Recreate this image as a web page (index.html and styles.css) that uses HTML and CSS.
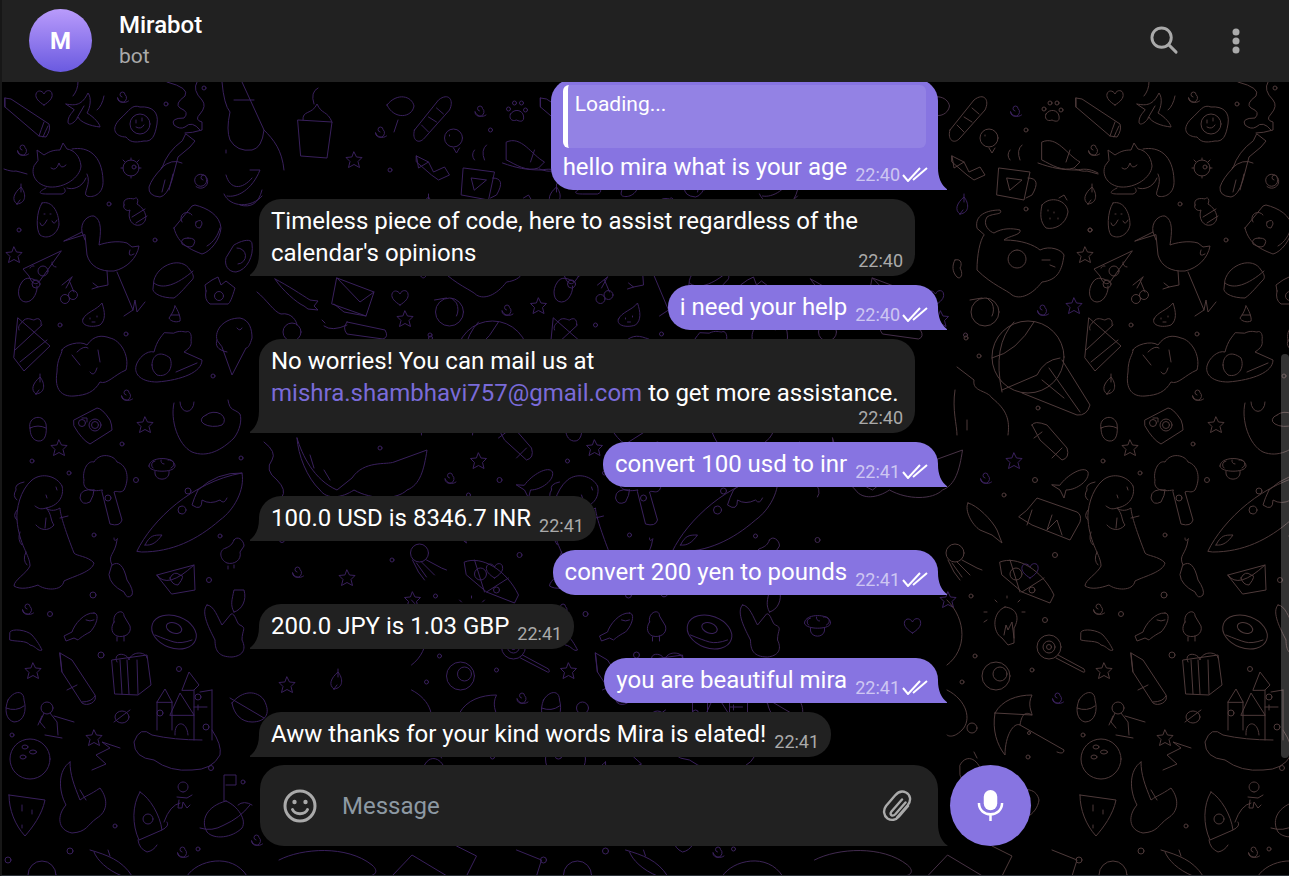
FILE: index.html
```html
<!DOCTYPE html>
<html lang="en">
<head>
<meta charset="utf-8">
<title>Mirabot</title>
<link rel="stylesheet" href="styles.css">
</head>
<body>
<div class="app">
  <header class="topbar">
    <div class="avatar">M</div>
    <div class="peer">
      <div class="peer-name">Mirabot</div>
      <div class="peer-status">bot</div>
    </div>
    <svg class="icon-search" viewBox="0 0 30 30"><circle cx="12" cy="12" r="10" /><path d="M19.500 19.500 27 27" /></svg>
    <svg class="icon-more" viewBox="0 0 8 26"><circle cx="4" cy="4" r="3.500" /><circle cx="4" cy="13" r="3.500" /><circle cx="4" cy="22" r="3.500" /></svg>
  </header>

  <main class="chat">
    <svg class="doodles" width="1287" height="794" viewBox="0 82 1287 794" aria-hidden="true">
      <defs>
        <linearGradient id="tint" gradientUnits="userSpaceOnUse" x1="0" y1="0" x2="535" y2="0">
          <stop offset="0" stop-color="#39205c"/>
          <stop offset=".3" stop-color="#39205c"/>
          <stop offset="1" stop-color="#4e3a3a"/>
        </linearGradient>
        <path id="swirl" d="M0 2a2.500 2.500 0 1 1 3-2.500 4.500 4.500 0 1 1-7.500 3 7 7 0 0 0 11 3.500"/>
        <path id="star" d="M0-8 2.500-3 8-2.500 4 1.500 5.500 7.500 0 4.500-5.500 7.500-4 1.500-8-2.500-2.500-3Z"/>
        <path id="heart" d="M0 8C-5 5-9 1-8-3-7-7-2-7 0-3 2-8 8-7 8-3 9 1 5 5 0 8Z"/>
        <path id="leaf" d="M-3 9C-9 5-6-2 1-8 6-2 7 8-3 9ZM-3 9 0 5M1-3 1-11"/>
        <path id="shroom" d="M-13-2C-13-12 13-12 13-2 13 5-13 5-13-2ZM-7 3C-9 14 9 14 7 3M-7-7A4 4 0 0 0-9 0M6-8A4 4 0 0 1 9 0M-1-8A3 3 0 0 0 2-4"/>
        <g id="tile">
          <!-- left part of the tile -->
          <path d="M3 98 9 99 47 124Q49 130 44 137L37 136 3 107ZM3 98 3 107M42 122Q39 130 37 136M46 126Q43 132 41 137"/>
          <use href="#heart" x="42" y="97"/>
          <path d="M64 104C74 106 80 105 86 93 90 98 88 108 85 113 92 117 98 124 98 127 88 126 78 122 76 117 72 124 66 126 66 122 66 116 70 113 72 110ZM75 118 82 106M76 82Q76 90 71 96M102 96Q100 106 95 110"/>
          <use href="#swirl" x="120" y="95"/>
          <path d="M118 119C128 110 130 104 138 107 150 106 157 112 155 124 153 136 150 142 142 141 132 143 128 142 124 137 115 137 107 130 118 119Z"/><circle cx="138" cy="124" r="10"/><path d="M134 127Q139 130 142 125M134 120v3M140 118v3"/>
          <circle cx="164" cy="104" r="2"/><circle cx="202" cy="88" r="2"/>
          <path d="M165 82Q188 88 183 96 172 104 178 108 188 112 182 118 168 118 172 125 178 130 183 127 190 120 198 130M195 82Q190 90 200 100 205 106 198 114 192 120 200 122L200 130Q190 133 183 133"/>
          <path d="M184 134 193 141 188 147 176 157 170 180Q165 196 158 197 146 196 147 187 150 178 160 168 165 152 180 141ZM159 168Q170 158 180 163M163 180 160 192M171 174 167 190"/>
          <path d="M220 82Q222 105 228 112 224 130 228 140 235 152 250 150 260 148 262 130L240 82M224 150 224 153M232 100H252"/>
          <use href="#swirl" x="20" y="148"/>
          <path d="M36 160 35 150 42 155C48 151 52 150 58 150L61 143 65 149C72 150 78 156 79 166 78 178 62 188 48 187 36 186 28 176 32 166ZM70 149C86 146 100 155 101 180 102 195 90 198 85 196 80 194 90 184 85 174M44 188C36 192 36 194 45 194L60 194C66 192 62 188 62 188M65 188C70 190 80 188 84 178M49 168Q54 172 57 163 59 170 64 165"/>
          <circle cx="129" cy="168" r="8"/><path d="M129 158v2M121 160l2 2M137 160l-2 2M119 168h2M137 168h2M129 178v-2"/><circle cx="132" cy="167" r="2"/>
          <path d="M201 180a2.500 2.500 0 1 1 3-2.500 6 6 0 1 1-7-3 7 7 0 1 1-3 12"/>
          <path d="M225 196C235 198 250 190 258 170H248M224 175C228 190 240 190 250 178M222 194C228 208 250 208 260 196M238 205Q255 210 260 190"/>
          <path d="M2 169Q10 172 14 171 18 172 25 174"/><use href="#leaf" x="18" y="195"/>
          <path d="M40 203C50 200 57 212 57 225 55 235 45 240 38 235 34 230 34 212 40 203ZM38 223Q40 230 45 220M50 221Q52 226 55 220M42 214h1M48 214h1"/>
          <circle cx="107" cy="204" r="2"/>
          <path d="M122 205C120 198 128 198 132 199 135 196 137 200 135 204 145 210 147 222 138 225 130 227 125 218 128 210 125 212 120 208 122 205ZM130 217 143 209M134 223 145 216"/>
          <path d="M172 228 190 206 193 205C205 208 218 215 219 228 218 240 208 252 200 254 190 250 176 245 172 228ZM205 246C212 242 216 235 218 228M190 215 A5 5 0 0 0 180 222M186 238Q178 238 180 244 190 250 192 244 195 238 186 238ZM194 222Q200 218 200 224 198 228 198 228 192 228 194 222Z"/>
          <circle cx="17" cy="230" r="2"/><circle cx="153" cy="240" r="2"/>
          <path d="M62 241 80 232C78 222 86 215 92 216 100 220 99 232 97 245 102 243 115 240 125 243L130 247 137 246C135 258 125 268 112 271 98 272 88 266 85 255L83 235ZM80 232 83 240M128 250Q125 258 132 254M105 271 106 285 96 287 91 283M96 287 90 289M115 272 131 310M122 316 131 310 133 300 135 312 143 302"/>
          <path d="M232 245C240 240 250 238 250 244 252 256 245 270 234 272 226 272 222 265 224 258ZM236 264A8 8 0 1 0 235 248"/>
          <use href="#star" x="12" y="255"/>
          <path d="M59 251 21 269 27 276C30 285 35 285 37 282ZM37 282C30 278 24 276 20 282 14 290 16 302 24 302 32 302 36 290 35 286"/><circle cx="41" cy="271" r="5"/><circle cx="34" cy="284" r="4"/><path d="M50 262A4 4 0 0 0 54 267M32 266A3 3 0 0 0 28 268"/>
          <path d="M70 277 64 288M70 277 60 285M67 280 72 292"/><circle cx="63" cy="299" r="4.500"/><circle cx="71" cy="295" r="4.500"/>
          <path d="M152 280C156 264 180 256 188 270 192 275 192 278 190 280 185 285 178 294 172 298 160 298 152 294 151 290ZM152 283C160 290 175 285 191 271"/>
          <path d="M204 291 203 285 210 280 216 277 219 285 224 281 233 288C230 298 228 303 226 304H208Q202 300 204 291Z"/><circle cx="217" cy="296" r="4.500"/>
          <path d="M81 319C84 312 95 310 100 303 103 312 104 320 98 325 90 328 78 326 81 319ZM88 318v1M95 316v1M90 322h3"/>
          <path d="M173 306C176 310 179 318 178 321 174 323 168 321 167 318 170 314 172 310 173 306ZM169 315h8"/>
          <circle cx="58" cy="325" r="2"/><circle cx="124" cy="334" r="2"/>
          <path d="M16 318 48 346 22 371 12 358ZM17 330C15 325 20 323 22 320 26 317 30 320 32 320 38 316 40 322 39 325M13 350 40 325M18 362 45 340"/>
          <path d="M60 350C60 355 55 358 55 372 52 390 60 397 72 396 85 395 92 392 98 382 105 385 112 375 124 370 128 355 118 340 108 338 100 335 92 335 85 345 78 340 62 345 60 350ZM86 348Q82 345 75 352M70 355 78 365M96 350 98 362M88 372Q92 378 95 368"/>
          <path d="M172 333C178 330 182 332 184 332 188 330 190 335 189 340 190 345 188 348 182 352L200 360C200 372 180 380 155 382 140 382 132 375 134 366 136 358 145 350 152 352 155 340 160 336 162 333ZM150 365C150 355 158 350 168 358 172 368 165 378 155 375 152 372 150 370 150 365ZM195 363 174 372"/>
          <path d="M215 340C212 330 222 318 238 318 248 320 250 330 250 338 248 345 246 348 244 348L230 375 220 347ZM225 352C215 350 213 345 215 340M235 328Q238 332 240 328"/>
          <use href="#leaf" x="37" y="385"/><use href="#swirl" x="124" y="393"/><circle cx="211" cy="376" r="2"/>
          <path d="M72 420 95 408Q100 408 108 420 110 425 110 430L88 444Q80 440 72 426ZM80 418h5v4"/><circle cx="93" cy="425" r="6"/><circle cx="93" cy="425" r="3.500"/><circle cx="80" cy="423" r="3.500"/>
          <path d="M28 428C25 418 40 412 44 424 45 432 44 442 36 441 30 440 28 434 28 428ZM28 428Q36 424 44 428"/>
          <use href="#star" x="143" y="425"/><use href="#star" x="57" y="448"/>
          <circle cx="120" cy="444" r="2"/><circle cx="30" cy="461" r="2"/><circle cx="67" cy="473" r="2"/><circle cx="134" cy="480" r="2.500"/><circle cx="239" cy="458" r="2"/>
          <path d="M172 403C168 420 176 445 190 452 205 458 220 450 232 438 238 430 240 420 238 414 232 408 228 412 226 400M178 402A6 8 0 0 0 192 402M204 415A8 6 0 0 1 220 425 10 5 0 0 1 204 415Z"/>
          <use href="#shroom" x="160" y="468"/>
          <path d="M100 490C90 492 80 490 82 480 80 472 85 460 92 462 98 452 112 455 115 462 125 465 128 478 122 490 118 494 115 490 112 492L120 520Q118 527 108 524L100 492ZM92 490Q78 488 78 498 80 506 88 502 92 495 92 490Z"/><circle cx="106" cy="498" r="3"/>
          <path d="M60 486C55 476 40 472 30 480 18 490 14 510 15 520 17 545 28 555 28 566 24 574 12 580 12 586 18 590 28 588 36 585 42 590 60 592 62 581 72 576 90 572 92 563 86 556 74 556 72 553 65 535 58 515 58 508 52 512 46 510 44 508 50 514 48 520 52 525 46 532 38 530 34 525M60 486C62 492 60 505 44 508 38 510 36 508 33 506M43 528 44 518M58 518 66 516M15 500Q10 496 14 490 12 484 22 482M15 520Q10 516 15 510M20 545Q15 540 18 532M25 565Q20 560 24 552M44 495l1 3M54 487l1 3"/>
          <path d="M135 551C150 520 190 482 240 473 243 490 232 510 218 520 195 540 170 552 140 552ZM240 473Q215 472 196 490 192 498 190 505 200 512 200 500 208 505 218 500 222 505 225 498M143 545C148 535 152 535 160 535 155 542 150 546 143 545Z"/><circle cx="180" cy="510" r="4"/><circle cx="186" cy="491" r="3"/>
          <path d="M110 565C105 555 113 555 115 540 117 535 112 545 112 538M110 565Q120 558 125 580 132 590 130 595 125 600 122 592 108 585 107 575Z"/>
          <path d="M155 575 192 565 193 590 170 594ZM155 575Q165 590 192 565M168 578Q172 570 178 575 184 575 176 585 170 585 168 578Z"/>
          <path d="M232 540C235 535 242 540 242 546L238 552C240 560 232 565 225 563 218 560 216 550 224 548 228 546 230 545 232 540ZM226 566v3M232 565v3"/>
          <circle cx="92" cy="535" r="2"/><circle cx="218" cy="536" r="2"/><circle cx="91" cy="595" r="3"/><circle cx="207" cy="580" r="2.500"/>
          <use href="#swirl" x="25" y="607"/><circle cx="48" cy="614" r="2.500"/>
          <path d="M92 613C98 613 95 625 88 632 80 636 76 640 76 640L72 638 64 641 62 636 70 632C72 625 82 612 92 613ZM84 620Q88 622 92 620"/>
          <path d="M112 622C110 612 122 608 122 616L128 626C130 634 122 638 115 636 110 634 108 628 112 622ZM115 637v4M122 636v5"/>
          <ellipse cx="172" cy="632" rx="23" ry="16" transform="rotate(20 172 632)"/><ellipse cx="172" cy="628" rx="8" ry="5" transform="rotate(20 172 628)"/><path d="M153 635Q165 640 172 642T190 640"/>
          <path d="M205 605C198 612 208 630 213 640 213 650 216 657 230 657 240 656 245 650 240 640 240 630 245 628 238 625 235 625 233 612 229 614L220 625C216 618 212 605 205 605ZM232 612C240 610 245 600 242 590H232C230 600 228 605 232 612Z"/>
          <path d="M8 632C10 628 25 630 30 635 36 642 38 646 40 650 36 652 34 646 28 645 24 640 14 642 8 640Z"/>
          <use href="#star" x="31" y="671"/><circle cx="99" cy="655" r="3"/><circle cx="177" cy="669" r="2.500"/>
          <path d="M58 653 70 660 93 695C96 702 85 707 80 703L60 672ZM58 653 60 672M75 685 65 690M93 696Q90 702 80 702"/>
          <path d="M110 660 145 655 149 685 136 695 113 694ZM115 662C110 652 125 652 127 660 130 650 145 652 145 658M125 660 127 694M135 660 136 694M118 660 120 694"/>
          <path d="M155 702 163 689 170 702ZM180 690 187 672 197 685 192 690ZM168 715 178 693 192 715ZM155 702V730M170 702V730M192 690V740M210 690 198 692M210 690V740M210 730Q220 745 218 755 210 770 190 770 168 772 152 760 132 758 132 742 138 725 150 735 172 740 200 740"/><circle cx="158" cy="713" r="3"/><circle cx="196" cy="697" r="3"/><circle cx="204" cy="727" r="3"/><path d="M173 735C172 720 185 720 186 735M192 707H205M196 705V710"/>
          <path d="M6 700C12 690 22 690 22 700 25 710 22 722 12 722 4 720 2 710 6 700ZM4 708Q14 712 22 706"/>
          <circle cx="45" cy="708" r="6"/><path d="M42 713 38 722 43 728M48 713 55 722 56 735M40 716 36 725M52 716 72 722M43 735 60 738"/>
          <ellipse cx="120" cy="717" rx="7" ry="6"/><path d="M128 710 112 722"/>
          <path d="M230 703C240 690 255 690 262 700 270 715 262 722 250 722 240 722 232 715 230 703ZM228 698 262 718"/>
          <use href="#star" x="92" y="738"/><circle cx="10" cy="735" r="2"/>
          <circle cx="28" cy="759" r="20"/><ellipse cx="23" cy="747" rx="3" ry="2"/><ellipse cx="31" cy="752" rx="3.500" ry="2"/><ellipse cx="21" cy="757" rx="3" ry="2"/>
          <path d="M68 762C56 770 56 790 64 805 55 815 55 830 70 833 85 832 85 825 95 818 105 812 107 800 98 788 88 795 85 795 78 800 72 785 68 775 68 762ZM90 770 104 764 94 755 108 748 100 742 118 748M78 790 84 800"/>
          <path d="M7 795 43 800C40 815 30 828 23 836 13 825 7 810 7 795ZM20 805v6M30 810v4M20 825v3"/>
          <path d="M138 792C148 798 158 815 160 830L137 840C130 825 130 805 138 792ZM136 840A15 15 0 0 0 145 852 15 15 0 0 0 155 845M160 830Q168 826 165 822M162 822Q168 805 178 803"/><circle cx="146" cy="819" r="5"/>
          <path d="M181 792 a5 5 0 1 1 .1 0M175 797 185 798 190 795M177 800 176 808 180 808 181 802 185 808 188 805"/>
          <path d="M224 801C236 806 245 820 240 828 230 838 212 840 205 832 198 820 205 806 224 801ZM222 801V775H234V785H224M198 828Q210 832 222 825 238 818 248 805M236 805Q242 800 250 805"/>
          <circle cx="209" cy="768" r="2.500"/><circle cx="241" cy="782" r="2"/><circle cx="113" cy="826" r="2"/><circle cx="196" cy="849" r="2"/>
          <use href="#swirl" x="254" y="838"/><use href="#swirl" x="180" y="850"/>
          <path d="M88 850C105 855 120 860 130 876M92 852C95 860 105 870 120 876M108 856 106 850"/><circle cx="6" cy="860" r="3"/><circle cx="68" cy="851" r="3"/><circle cx="40" cy="875" r="14"/>
          <path d="M185 876C195 860 230 852 245 876"/>

          <!-- middle part of the tile -->
          <path d="M273 279C285 285 300 295 308 300L316 301 312 306 316 310 306 309 302 306C295 303 280 290 273 279Z"/>
          <path d="M255 292C265 300 272 312 279 314 290 312 295 322 295 325"/><circle cx="290" cy="332" r="9"/>
          <path d="M335 278 372 292 364 316 330 304ZM335 278 358 302 372 292M332 304 342 312 364 316"/>
          <use href="#heart" x="398" y="297"/><use href="#star" x="403" y="319"/><circle cx="428" cy="335" r="2"/>
          <path d="M320 320l3 3M322 326Q330 332 345 325M345 322 383 330Q387 337 381 339L345 334Q340 328 345 322Z"/>
          <path d="M262 442Q275 452 270 460 262 470 275 480 285 490 280 497"/>
          <path d="M295 438C300 455 312 480 335 490L350 478C362 460 385 465 392 462L425 450C422 470 418 485 405 490 395 500 370 500 352 490 340 498 325 500 318 490 305 478 296 455 295 438ZM308 455 312 468M322 470 328 480"/><circle cx="378" cy="448" r="2"/>
          <path d="M296 120 330 122 325 158 299 156ZM301 120C300 110 310 115 315 104 320 115 325 110 330 122M312 104Q308 92 316 88"/>
          <use href="#star" x="352" y="160"/><use href="#swirl" x="378" y="130"/><use href="#swirl" x="295" y="570"/><use href="#star" x="345" y="578"/><use href="#shroom" x="280" y="625"/>
          <use href="#heart" x="375" y="625"/><use href="#leaf" x="335" y="680"/><use href="#star" x="285" y="685"/><circle cx="388" cy="170" r="2"/><circle cx="280" cy="540" r="2.500"/><circle cx="390" cy="560" r="2"/>
          <path d="M277 860C300 848 345 845 370 865 378 872 372 876 366 876M390 876 410 855 445 876"/>
          <path d="M385 105C395 92 410 96 412 106 410 118 392 120 385 105ZM396 120 392 132M262 130C272 140 280 150 282 170"/>

          <!-- right part of the tile -->
          <g transform="translate(-535.500 0)">
          <path d="M948 130 972 100C982 92 988 100 983 110L958 138C952 145 945 140 948 130ZM955 125 962 132M962 117 970 122M970 108 977 114"/>
          <use href="#swirl" x="1013" y="109"/>
          <path d="M1044 114C1048 108 1056 110 1057 116 1058 122 1054 122 1050 120 1045 122 1042 118 1044 114Z"/><circle cx="1042" cy="109" r="2"/><circle cx="1048" cy="103" r="2"/><circle cx="1055" cy="103" r="2"/><circle cx="1059" cy="110" r="2"/>
          <circle cx="987" cy="138" r="9"/><path d="M987 148 990 153 993 148M983 135v1"/><circle cx="1024" cy="130" r="2"/>
          <path d="M950 156 962 162 967 172 978 167 983 175 972 180 965 175 950 162ZM950 156 952 168 962 162"/>
          <path d="M997 168 1028 172 1022 200 995 195ZM1026 178Q1040 178 1030 195L1024 198M1005 178 1020 180 1008 190ZM1008 160Q1004 155 1008 150M1018 160Q1014 150 1020 145"/>
          <path d="M1040 142C1055 135 1065 155 1078 162L1072 168C1060 172 1050 165 1040 160ZM1036 163C1050 168 1060 170 1075 170 1085 168 1090 170 1096 173M1068 150 1064 162"/>
          <use href="#leaf" x="961" y="205"/><circle cx="1024" cy="209" r="2"/><circle cx="1088" cy="230" r="2"/>
          <path d="M1040 205C1048 195 1065 200 1066 212 1064 225 1052 230 1044 228 1038 222 1038 214 1040 205ZM1057 198 1062 195 1065 200M1046 210v1M1052 212v1M1048 218v1M1056 218v1"/>
          <path d="M975 228C972 215 985 210 998 210 1002 215 990 213 985 217 980 225 988 232 992 233 1000 228 1010 228 1018 230 1020 235 1006 236 1002 240 1020 240 1032 245 1038 250 1048 245 1060 250 1062 255 1060 270 1056 280 1040 282 1030 295 1018 300 1010 295 1005 290 990 285 975 270 975 255 978 240 982 235ZM1015 250a9 9 0 1 0 .1 0M1040 260h8M1048 265l5 2"/>
          <path d="M953 260C960 258 960 265 958 268 962 275 958 280 955 277 950 272 950 265 953 260Z"/>
          <circle cx="983" cy="312" r="14"/><path d="M980 298 968 300M985 298 990 303Q993 310 990 316"/>
          <use href="#swirl" x="1040" y="308"/><use href="#star" x="1072" y="306"/>
          <circle cx="1026" cy="357" r="36"/><path d="M990 358Q1015 352 1032 322M1012 322Q990 345 1000 392M1060 360 1088 405Q1085 416 1075 415L1020 393M1047 368 1078 412M1040 380 1062 398M1000 390 1035 375Q1042 360 1058 358"/>
          <path d="M955 367 972 380C970 392 985 390 990 398 1005 410 1008 420 1006 435M953 390C950 410 955 425 955 435M965 420V430"/><circle cx="964" cy="338" r="2"/><circle cx="977" cy="356" r="2"/><circle cx="1036" cy="408" r="2"/>
          <path d="M1030 425 1038 440 1060 460Q1068 458 1065 448L1045 425Q1032 420 1030 425ZM1040 432 1032 438M1060 448 1050 458"/>
          <use href="#star" x="1012" y="461"/><use href="#swirl" x="983" y="476"/><circle cx="1033" cy="480" r="2.500"/><circle cx="1002" cy="495" r="2"/>
          <path d="M1058 485C1065 475 1082 465 1086 472 1088 480 1075 490 1064 490L1062 498 1058 490 1050 485Z"/>
          <path d="M1025 510 1035 498 1075 512Q1080 515 1078 522L1068 540 1030 525 1017 517ZM1030 510 1025 525M1050 515 1045 530 1055 520 1060 535"/>
          <path d="M966 503C975 505 990 520 995 530L1000 543 990 535 978 530C970 525 962 510 966 503Z"/>
          <circle cx="953" cy="553" r="9"/><path d="M955 562 968 575M950 563 960 577M946 560 952 572 958 580M960 560 975 568 980 570"/>
          <path d="M998 562C1015 555 1040 570 1052 595L1048 603 1020 592 1000 575ZM1008 560 1018 592M1042 578 1020 592"/><circle cx="1014" cy="574" r="6"/><circle cx="1030" cy="590" r="3"/><use href="#heart" x="1028" y="570"/><circle cx="1053" cy="555" r="2.500"/>
          <use href="#star" x="946" y="600"/><circle cx="969" cy="596" r="2"/>
          <path d="M1003 607C1015 608 1018 618 1012 628L1012 643 1006 645 1000 638C990 632 990 612 1003 607ZM1002 635 1004 625 1006 630 1010 622 1012 638"/><path d="M995 602 993 600M1005 598V596M1016 602 1018 600M982 612H985M1020 612H1023M982 622 985 620"/>
          <circle cx="1043" cy="620" r="2.500"/><circle cx="973" cy="656" r="2"/><circle cx="1030" cy="670" r="2"/><circle cx="960" cy="682" r="2"/>
          <circle cx="1047" cy="647" r="12"/><path d="M1056 655 1082 669Q1084 673 1081 672L1054 658"/><circle cx="1047" cy="647" r="6"/><circle cx="1047" cy="647" r="2.500"/>
          <circle cx="994" cy="676" r="14"/><circle cx="998" cy="674" r="7"/>
          <path d="M945 600C965 620 965 650 945 665M945 690C965 700 970 720 960 730 950 740 945 735 945 735"/><circle cx="970" cy="728" r="5"/>
          <path d="M993 713C1000 700 1015 695 1030 695 1025 705 1030 712 1030 715 1025 712 1020 712 1018 725 1012 722 1003 735 1003 755 995 745 990 730 993 713ZM993 713 1030 715M1018 725 1062 750Q1062 755 1055 752"/><use href="#swirl" x="1055" y="696"/><circle cx="1027" cy="733" r="1.500"/><circle cx="1026" cy="757" r="2"/>
          <path d="M958 765C965 752 978 760 980 775 975 785 960 785 958 775ZM972 752 975 758"/>
          <path d="M1005 795C1025 785 1035 790 1037 800 1035 815 1018 825 1005 815 1000 810 1000 800 1005 795Z"/><path d="M990 846 1010 856 1000 876M1050 850 1075 860 1070 876"/>
          </g>
        </g>
      </defs>
      <use href="#tile" class="tile-a"/>
      <use href="#tile" x="535.500" class="tile-b"/>
      <use href="#tile" x="1071" class="tile-c"/>
    </svg>

    <div class="scrollbar"></div>

    <div class="column">
      <div class="messages">
        <div class="bubble out">
          <div class="reply">Loading...</div>
          <span>hello mira what is your age</span><span class="meta"><span class="time">22:40</span><svg class="ticks" viewBox="0 0 26 15"><path d="M1 8 6 14 18 1M11 13 25 1"/></svg></span>
        </div>
        <div class="bubble in">
          <span>Timeless piece of code, here to assist regardless of the calendar's opinions</span><span class="meta"><span class="time">22:40</span></span>
        </div>
        <div class="bubble out">
          <span>i need your help</span><span class="meta"><span class="time">22:40</span><svg class="ticks" viewBox="0 0 26 15"><path d="M1 8 6 14 18 1M11 13 25 1"/></svg></span>
        </div>
        <div class="bubble in">
          <span>No worries! You can mail us at <a class="link">mishra.shambhavi757@gmail.com</a> to get more assistance.</span><span class="meta below"><span class="time">22:40</span></span>
        </div>
        <div class="bubble out">
          <span>convert 100 usd to inr</span><span class="meta"><span class="time">22:41</span><svg class="ticks" viewBox="0 0 26 15"><path d="M1 8 6 14 18 1M11 13 25 1"/></svg></span>
        </div>
        <div class="bubble in">
          <span>100.0 USD is 8346.7 INR</span><span class="meta"><span class="time">22:41</span></span>
        </div>
        <div class="bubble out">
          <span>convert 200 yen to pounds</span><span class="meta"><span class="time">22:41</span><svg class="ticks" viewBox="0 0 26 15"><path d="M1 8 6 14 18 1M11 13 25 1"/></svg></span>
        </div>
        <div class="bubble in">
          <span>200.0 JPY is 1.03 GBP</span><span class="meta"><span class="time">22:41</span></span>
        </div>
        <div class="bubble out">
          <span>you are beautiful mira</span><span class="meta"><span class="time">22:41</span><svg class="ticks" viewBox="0 0 26 15"><path d="M1 8 6 14 18 1M11 13 25 1"/></svg></span>
        </div>
        <div class="bubble in">
          <span>Aww thanks for your kind words Mira is elated!</span><span class="meta"><span class="time">22:41</span></span>
        </div>
      </div>

      <div class="input-row">
        <div class="composer">
          <svg class="icon-smile" viewBox="0 0 34 34"><circle cx="17" cy="17" r="15"/><circle class="solid" cx="11.500" cy="13" r="2.200"/><circle class="solid" cx="22.500" cy="13" r="2.200"/><path d="M9.500 20.500C12 26 22 26 24.500 20.500"/></svg>
          <div class="placeholder">Message</div>
          <svg class="icon-clip" viewBox="0 0 30 32"><path d="M15 27.500 25.500 15.500C30 10 28 4.500 24 2.500 20 .5 16 2 13 5.500L4 16C1 20 1.500 25.500 5.500 28.500 9.500 31 14 30 17 26.500L26 16M20 9.500 9.500 21.500C8 23.500 8.500 25 10 25.500 11.500 26 12.500 25 13.500 24L23.500 12.500"/></svg>
        </div>
        <button class="mic" type="button" aria-label="Record">
          <svg class="icon-mic" viewBox="0 0 28 34"><rect class="solid" x="7" y="1" width="14" height="21" rx="7"/><path d="M2 14.500C2 30 26 30 26 14.500M14 25V33"/></svg>
        </button>
      </div>
    </div>
  </main>
</div>
</body>
</html>
```

FILE: styles.css
```css
* { box-sizing: border-box; }

html, body {
  margin: 0;
  height: 100%;
  background: #000;
}

body {
  font-family: Roboto, "Liberation Sans", sans-serif;
  color: #fff;
  overflow: hidden;
}

.app {
  display: flex;
  flex-direction: column;
  height: 876px;
  border-left: 2px solid #171717;
  border-bottom: 1px solid #2a3038;
}

.topbar {
  position: relative;
  z-index: 2;
  flex: none;
  display: flex;
  align-items: center;
  height: 82px;
  padding: 0 49px 1px 27px;
  background: #212121;
}

.avatar {
  flex: none;
  width: 63px;
  height: 63px;
  border-radius: 50%;
  display: flex;
  align-items: center;
  justify-content: center;
  background: linear-gradient(#b99bfb, #6a5ae0);
  font-size: 24px;
  font-weight: 700;
}

.peer {
  flex: 1;
  margin-left: 27px;
  padding-bottom: 1px;
}

.peer-name {
  font-size: 24px;
  font-weight: 500;
  line-height: 32px;
}

.peer-status {
  font-size: 21px;
  line-height: 30px;
  color: #aaa;
}

.icon-search {
  width: 29px;
  height: 29px;
  margin-right: 53px;
  fill: none;
  stroke: #aaa;
  stroke-width: 3;
  stroke-linecap: round;
}

.icon-more {
  width: 8px;
  height: 26px;
  fill: #aaa;
}

.chat {
  position: relative;
  flex: 1;
  min-height: 0;
  display: flex;
  justify-content: center;
  padding-bottom: 29px;
  overflow: hidden;
}

.doodles {
  position: absolute;
  left: 0;
  top: 0;
  fill: none;
  stroke-width: 1;
  stroke-linejoin: round;
  stroke-linecap: round;
}

.tile-a { stroke: #39205c; }
.tile-b { stroke: url(#tint); }
.tile-c { stroke: #4e3a3a; }

.scrollbar {
  position: absolute;
  right: 0;
  top: 272px;
  width: 8px;
  height: 404px;
  border-radius: 4px;
  background: rgba(255, 255, 255, .2);
}

.column {
  position: relative;
  display: flex;
  flex-direction: column;
  width: 791px;
  min-height: 0;
}

.messages {
  flex: 1;
  min-height: 0;
  width: 697px;
  padding-bottom: 8px;
  display: flex;
  flex-direction: column;
  justify-content: flex-end;
  gap: 9px;
  overflow: hidden;
}

.bubble {
  position: relative;
  flex: none;
  max-width: 656px;
  padding: 6px 12px 7px;
  border-radius: 22px;
  font-size: 24px;
  line-height: 32px;
}

.bubble::after {
  content: "";
  position: absolute;
  bottom: 0;
  width: 10px;
  height: 22px;
  background: inherit;
}

.bubble.in {
  align-self: flex-start;
  margin-left: 9px;
  background: #212121;
  border-bottom-left-radius: 0;
}

.bubble.in::after {
  right: 100%;
  clip-path: path("M10 0C10 9 7 17 0 21.500Q0 22 1 22H10Z");
}

.bubble.out {
  align-self: flex-end;
  margin-right: 9px;
  background: #8774e1;
  border-bottom-right-radius: 0;
}

.bubble.out::after {
  left: 100%;
  clip-path: path("M0 0C0 9 3 17 9.500 21.500Q10 22 9 22H0Z");
}

.reply {
  height: 63px;
  margin-bottom: 3px;
  padding: 3px 12px 0 7px;
  border-left: 5px solid #fff;
  border-radius: 6px;
  background: rgba(255, 255, 255, .1);
  font-size: 21px;
  line-height: 32px;
}

.link {
  color: #7a6bd9;
}

.meta {
  float: right;
  display: flex;
  align-items: center;
  margin: 15px 0 0 8px;
  height: 17px;
  font-size: 18px;
  line-height: 17px;
  color: #aaa;
}

.meta.below {
  margin-top: 0;
}

.out .meta {
  margin-right: -2px;
  color: rgba(255, 255, 255, .6);
}

.ticks {
  width: 26px;
  height: 15px;
  margin-left: 2px;
  fill: none;
  stroke: #fff;
  stroke-width: 2;
}

.input-row {
  flex: none;
  display: flex;
  align-items: stretch;
  gap: 12px;
  height: 81px;
  padding-left: 10px;
}

.composer {
  position: relative;
  width: 678px;
  display: flex;
  align-items: center;
  padding: 0 26px 0 23px;
  background: #212121;
  border-radius: 24px 24px 0 24px;
}

.composer::after {
  content: "";
  position: absolute;
  left: 100%;
  bottom: 0;
  width: 10px;
  height: 22px;
  background: inherit;
  clip-path: path("M0 0C0 9 3 17 9.500 21.500Q10 22 9 22H0Z");
}

.icon-smile {
  flex: none;
  width: 34px;
  height: 34px;
  fill: none;
  stroke: #aaa;
  stroke-width: 3;
  stroke-linecap: round;
}

.solid {
  fill: currentColor;
  stroke: none;
}

.icon-smile .solid { color: #aaa; }

.placeholder {
  flex: 1;
  margin-left: 25px;
  font-size: 24px;
  color: #8d99a3;
}

.icon-clip {
  flex: none;
  width: 30px;
  height: 32px;
  fill: none;
  stroke: #aaa;
  stroke-width: 2.400;
  stroke-linecap: round;
}

.mic {
  flex: none;
  width: 81px;
  height: 81px;
  padding: 0;
  border: 0;
  border-radius: 50%;
  background: #8774e1;
  display: flex;
  align-items: center;
  justify-content: center;
}

.icon-mic {
  width: 27px;
  height: 33px;
  fill: none;
  stroke: #fff;
  stroke-width: 2.600;
  color: #fff;
}
```
